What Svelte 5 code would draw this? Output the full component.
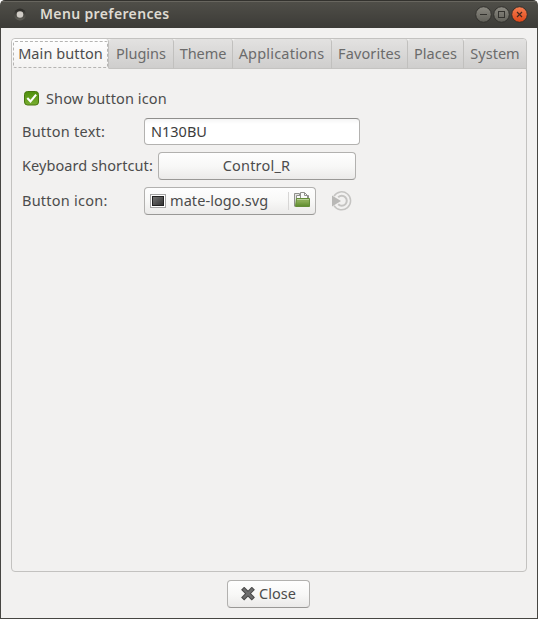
<script>
  const tabs = [
    { label: 'Main button', cls: 'main' },
    { label: 'Plugins', cls: 'plugins' },
    { label: 'Theme', cls: 'theme' },
    { label: 'Applications', cls: 'applications' },
    { label: 'Favorites', cls: 'favorites' },
    { label: 'Places', cls: 'places' },
    { label: 'System', cls: 'system' }
  ];
  let active = $state(0);
  let showIcon = $state(true);
  let buttonText = $state('N130BU');
</script>

<div class="window">
  <header class="titlebar">
    <svg class="app-icon" width="14" height="14" viewBox="0 0 14 14">
      <defs>
        <linearGradient id="ring" x1="0" y1="0" x2="0" y2="1">
          <stop offset="0" stop-color="#292825" /><stop offset="1" stop-color="#62615a" />
        </linearGradient>
      </defs>
      <circle cx="7" cy="6.5" r="6" fill="url(#ring)" />
      <circle cx="7" cy="6.5" r="3.3" fill="#d0ccc6" />
    </svg>
    <h1>Menu preferences</h1>
    <div class="controls">
      <svg width="54" height="18" viewBox="0 0 54 18">
        <defs>
          <linearGradient id="grey" x1="0" y1="0" x2="0" y2="1">
            <stop offset="0" stop-color="#8c8a82" /><stop offset="1" stop-color="#605f58" />
          </linearGradient>
          <linearGradient id="orange" x1="0" y1="0" x2="0" y2="1">
            <stop offset="0" stop-color="#f68053" /><stop offset="1" stop-color="#df4517" />
          </linearGradient>
        </defs>
        <g stroke="#32312d">
          <circle cx="9.5" cy="8.5" r="7.8" fill="url(#grey)" />
          <circle cx="27.5" cy="8.5" r="7.8" fill="url(#grey)" />
          <circle cx="45.5" cy="8.5" r="7.8" fill="url(#orange)" />
        </g>
        <path d="M6 8.5h7" stroke="#33322e" />
        <rect x="24.5" y="5.5" width="6" height="6" fill="none" stroke="#33322e" />
        <path d="m43 6 5 5m0-5-5 5" stroke="#46291f" stroke-width="1.2" />
      </svg>
    </div>
  </header>

  <main>
    <section class="notebook">
      <div class="tabs" role="tablist">
        {#each tabs as tab, i}
          <button class="tab {tab.cls}" class:active={active === i} role="tab" aria-selected={active === i} onclick={() => (active = i)}>
            <span>{tab.label}</span>
          </button>
        {/each}
      </div>

      <div class="panel">
        <label class="row check-row">
          <input type="checkbox" bind:checked={showIcon} />
          <svg width="15" height="15" viewBox="0 0 15 15">
            <defs>
              <linearGradient id="check" x1="0" y1="0" x2="0" y2="1">
                <stop offset="0" stop-color="#4e8f0c" /><stop offset="1" stop-color="#79ae31" />
              </linearGradient>
            </defs>
            <rect x=".5" y=".5" width="14" height="13.5" rx="3" fill="url(#check)" stroke="#48760f" />
            {#if showIcon}
              <path d="m3.3 7 3.2 3.4 5.6-6.7" fill="none" stroke="#fff" stroke-width="2.1" />
            {/if}
          </svg>
          <span class="show">Show button icon</span>
        </label>

        <div class="row text-row">
          <label class="caption" for="text"><span class="c-text">Button text:</span></label>
          <input id="text" class="entry" bind:value={buttonText} />
        </div>

        <div class="row key-row">
          <span class="key-caption"><span class="c-key">Keyboard shortcut:</span></span>
          <button class="button key"><span class="c-ctrl">Control_R</span></button>
        </div>

        <div class="row icon-row">
          <span class="caption"><span class="c-icon">Button icon:</span></span>
          <button class="button file">
            <svg width="16" height="14" viewBox="0 0 16 14">
              <defs>
                <linearGradient id="thumb" x1="0" y1="0" x2="1" y2="1">
                  <stop offset="0" stop-color="#777" /><stop offset="1" stop-color="#303030" />
                </linearGradient>
              </defs>
              <rect x=".5" y=".5" width="15" height="13" fill="#fff" stroke="#a5a5a5" />
              <rect x="2.5" y="2.5" width="11" height="9" fill="url(#thumb)" stroke="#222" />
            </svg>
            <span class="c-file">mate-logo.svg</span>
            <i></i>
            <svg class="folder" width="16" height="16" viewBox="0 0 16 16">
              <defs>
                <linearGradient id="folder" x1="0" y1="0" x2="0" y2="1">
                  <stop offset="0" stop-color="#8fb25c" /><stop offset=".4" stop-color="#86aa52" /><stop offset="1" stop-color="#5c8a2b" />
                </linearGradient>
              </defs>
              <path d="M.5 14.5V1.5h5v2h9v10" fill="#e4e4e2" stroke="#90908c" />
              <path d="M2.5 13V3.5h5V9" fill="#fafafa" stroke="#90908c" />
              <path d="M6.5 8V.5h4l3 3V8" fill="#fafafa" stroke="#90908c" />
              <path d="M10.5.5v3h3" fill="none" stroke="#90908c" />
              <path d="M2.5 6.5h13v8h-14z" fill="url(#folder)" stroke="#648d38" />
              <path d="M3 7.5h12" stroke="#b8d098" />
            </svg>
          </button>
          <svg class="reset" width="22" height="20" viewBox="0 0 22 20">
            <g fill="none" stroke="#c5c4c2">
              <path d="M3 5A9 9 0 1 1 3 14.6" stroke-width="1.5" />
              <path d="M7.2 6.3A5 5 0 1 1 7.2 13.3" stroke-width="2" />
            </g>
            <path d="M1 4.5v11L10 10z" fill="#b9b8b6" />
          </svg>
        </div>
      </div>
    </section>

    <footer>
      <button class="button close">
        <svg width="14" height="14" viewBox="0 0 14 14">
          <path d="m3.2 2.8 7.6 7.6m0-7.6-7.6 7.6" stroke="#484848" stroke-width="4.4" stroke-linecap="square" />
          <path d="m3.2 2.8 7.6 7.6m0-7.6-7.6 7.6" stroke="#6e6e6e" stroke-width="2.4" stroke-linecap="square" />
        </svg>
        <span class="c-close">Close</span>
      </button>
    </footer>
  </main>
</div>

<style>
  :global(body) { margin: 0; background: #fff; }
  * { box-sizing: border-box; }
  .window {
    width: 538px; height: 619px; display: flex; flex-direction: column; overflow: hidden;
    font: 14.5px/20px 'Noto Sans', sans-serif; color: #4c4c4c;
    background: #f2f1f0; border-radius: 5px 5px 0 0;
  }
  button, input { font: inherit; color: inherit; margin: 0; padding: 0; }
  span { white-space: nowrap; }
  svg { flex: none; display: block; }
  .titlebar {
    height: 28px; flex: none; display: flex; align-items: center; padding: 0 10px 0 13px;
    background: linear-gradient(#504f49, #3c3b37);
    border-top: 1px solid #33322e; box-shadow: inset 0 1px #68665f;
  }
  h1 { margin: 0 auto 0 13px; padding-bottom: 2px; font-size: 14px; line-height: 20px; font-weight: 600; color: #dfdbd2; letter-spacing: .36px; }
  .controls { width: 54px; }
  main { flex: 1; border: solid #474642; border-width: 0 1px 1px; padding: 10px 10px 0; display: flex; flex-direction: column; }
  .notebook { height: 534px; border: 1px solid #c3c2c0; border-radius: 4px; overflow: hidden; }
  .tabs { display: flex; height: 30px; }
  .tab {
    flex: none; border: 0; border-right: 1px solid #c1c0be; border-bottom: 1px solid #c4c3c1;
    background: linear-gradient(#e3e2e1, #cfcecd); color: #6b6b6b;
    display: flex; align-items: center; justify-content: center; padding-bottom: 2px;
    border-radius: 3px 3px 0 0;
  }
  .tab.active { background: linear-gradient(#fff, #f3f2f1); color: #4c4c4c; border-bottom-color: #f2f1f0; padding: 1px 0 0 1px; }
  .tab.active span { width: 95px; height: 27px; line-height: 23px; border: 1px dashed #b5b4b2; border-radius: 2px; text-align: center; letter-spacing: .08px; }
  .main { width: 97px; }
  .plugins { width: 65px; }
  .theme { width: 59px; }
  .theme span { letter-spacing: -.1px; }
  .applications { width: 99px; }
  .applications span { letter-spacing: .2px; position: relative; left: -.5px; }
  .favorites { width: 76px; }
  .favorites span { letter-spacing: .1px; }
  .places { width: 56px; letter-spacing: .08px; }
  .system { width: 62px; border-right: 0; }
  .panel { padding: 20px 10px; display: flex; flex-direction: column; }
  .row { display: flex; align-items: center; }
  .row span, .c-close { padding-bottom: 2px; }
  .row .caption, .row .key-caption { padding-bottom: 0; }
  .caption span, .key-caption span { display: block; }
  .check-row { height: 20px; gap: 7px; padding-left: 2px; }
  .check-row svg { margin-top: -1px; }
  .check-row input { position: absolute; opacity: 0; }
  .show { letter-spacing: .12px; }
  .c-text, .c-icon { letter-spacing: .24px; }
  .c-key { letter-spacing: .08px; }
  .c-ctrl { letter-spacing: .2px; margin-left: -1px; }
  .c-file { letter-spacing: .08px; }
  .text-row { height: 27px; margin-top: 9px; }
  .key-row { height: 28px; margin-top: 7px; }
  .icon-row { height: 28px; margin-top: 7px; }
  .caption { width: 122px; }
  .key-caption { width: 136px; }
  .entry {
    width: 216px; height: 27px; padding: 0 6px 2px; border: 1px solid #b3b2b0; border-top-color: #8f8e8c;
    border-radius: 4px; outline: 0; color: #3c3c3c; background: linear-gradient(#f5f5f5, #fff 5px);
  }
  .button {
    height: 28px; border: 1px solid #b2b1af; border-bottom-color: #999896; border-radius: 4px;
    background: linear-gradient(#fefefe, #f8f8f7 50%, #ebeae9); display: flex; align-items: center; justify-content: center;
  }
  .key { width: 198px; }
  .file { width: 172px; padding: 0 5px; justify-content: flex-start; gap: 4px; }
  .file i { width: 1px; height: 18px; background: #d7d6d5; margin-left: auto; }
  .folder { margin-top: -2px; margin-left: 1px; }
  .reset { margin-left: 15px; }
  footer { display: flex; justify-content: center; padding: 8px 1px 0 0; }
  .close { width: 83px; gap: 4px; }
</style>
